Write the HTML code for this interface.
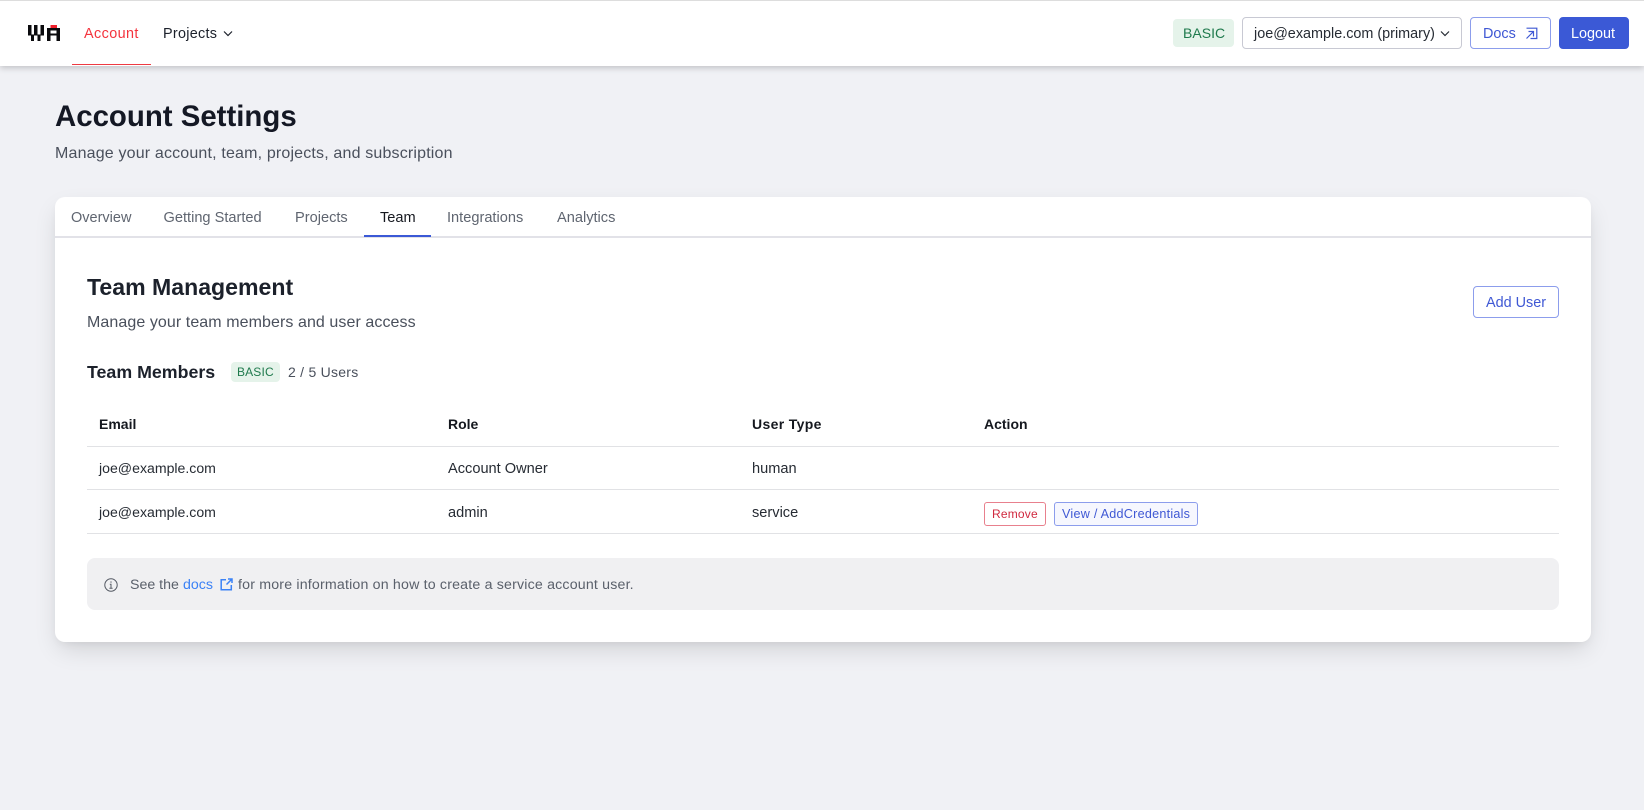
<!DOCTYPE html>
<html lang="en"><head><meta charset="utf-8"><title>Account Settings</title>
<style>
*{box-sizing:border-box}
html,body{margin:0;padding:0;width:1644px;height:810px;overflow:hidden;background:#f0f1f5;font-family:"Liberation Sans",Arial,sans-serif;color:#1c212b}
.t{position:absolute;white-space:nowrap;line-height:20px;font-size:14.6px}
.box{position:absolute}
.hdr{left:0;top:0;width:1644px;height:66px;background:#fff;border-top:1px solid #ddd;box-shadow:0 2px 6px rgba(0,0,0,.2)}
.card{left:55px;top:197px;width:1536px;height:445px;background:#fff;border-radius:10px;box-shadow:0 10px 25px -4px rgba(0,0,0,.14),0 4px 10px -4px rgba(0,0,0,.08)}
.btn{position:absolute;border-radius:4px;background:#fff;border:1px solid #8c9dec;height:32px}
.g{color:#5f6570}
.line{position:absolute;left:87px;width:1472px;height:1px;background:#e1e2e5}
svg{position:absolute;display:block}
</style></head><body>
<div class="box hdr"></div>
<svg style="left:28px;top:25px" width="32" height="16" viewBox="0 0 32 16">
<g fill="#0b0b0e"><rect x="0" y="0" width="3.5" height="10.5"/><rect x="6" y="0" width="3.5" height="10.5"/><rect x="12.5" y="0" width="3.5" height="10.5"/><rect x="3" y="9.5" width="3" height="6.5"/><rect x="9.5" y="9.5" width="3" height="6.5"/><rect x="19" y="3" width="13" height="2.5"/><rect x="19" y="3" width="3.5" height="13"/><rect x="28.5" y="3" width="3.5" height="13"/><rect x="22" y="8.5" width="7" height="2"/></g>
<rect x="22.5" y="0" width="6.5" height="3" fill="#f0202c"/></svg>
<div class="t" style="left:84px;top:24px;color:#f4333d;font-size:14.4px;letter-spacing:.4px">Account</div>
<div class="box" style="left:72px;top:64px;width:79px;height:1px;background:#ee3a42"></div>
<div class="t" style="left:163px;top:24px;color:#1c212b;font-size:14.4px;letter-spacing:.28px">Projects</div>
<svg style="left:223px;top:30px" width="10" height="7" viewBox="0 0 10 7" fill="none" stroke="#1c212b" stroke-width="1.2"><path d="M1 1.5l4 4 4-4"/></svg>
<div class="box" style="left:1173px;top:19px;width:61px;height:28px;background:#e5f3ea;border-radius:4px"></div>
<div class="t" style="left:1183px;top:23px;color:#1f7a4d;font-size:14px;letter-spacing:.02px">BASIC</div>
<div class="btn" style="left:1242px;top:17px;width:220px;border-color:#c8c9d3"></div>
<div class="t" style="left:1254px;top:24px;color:#262b33;font-size:14.4px">joe@example.com (primary)</div>
<svg style="left:1440px;top:30px" width="10" height="7" viewBox="0 0 10 7" fill="none" stroke="#262b33" stroke-width="1.2"><path d="M1 1.5l4 4 4-4"/></svg>
<div class="btn" style="left:1470px;top:17px;width:81px"></div>
<div class="t" style="left:1483px;top:24px;color:#3f58d4;font-size:14.4px">Docs</div>
<svg style="left:1525px;top:27px" width="13" height="13" viewBox="0 0 13 13" fill="none" stroke="#3f58d4" stroke-width="1.2"><path d="M1.5 1.2h10.3v10.3H5.5M8.5 4.5L1.5 11.5M3.5 4.5h5v5"/></svg>
<div class="btn" style="left:1559px;top:17px;width:70px;background:#3b59d6;border-color:#3b59d6"></div>
<div class="t" style="left:1571px;top:24px;color:#fff;font-size:14.4px">Logout</div>

<div class="t" style="left:55px;top:97px;line-height:40px;font-size:29.4px;font-weight:bold;color:#141824">Account Settings</div>
<div class="t" style="left:55px;top:144px;font-size:16px;color:#4a505c;letter-spacing:.17px">Manage your account, team, projects, and subscription</div>

<div class="box card"></div>
<div class="box" style="left:55px;top:236px;width:1536px;height:2px;background:#e2e2e8"></div>
<div class="box" style="left:364px;top:235px;width:67px;height:2px;background:#3b59d6"></div>
<div class="t g" style="left:71px;top:208px;font-size:14.5px">Overview</div>
<div class="t g" style="left:163.5px;top:208px">Getting Started</div>
<div class="t g" style="left:295px;top:208px">Projects</div>
<div class="t" style="left:380px;top:208px;color:#15181f">Team</div>
<div class="t g" style="left:447px;top:208px">Integrations</div>
<div class="t g" style="left:557px;top:208px">Analytics</div>

<div class="t" style="left:87px;top:272px;line-height:30px;font-size:23.1px;font-weight:bold;color:#1c212b">Team Management</div>
<div class="t" style="left:87px;top:313px;font-size:16px;color:#4a505c;letter-spacing:.08px">Manage your team members and user access</div>
<div class="btn" style="left:1473px;top:286px;width:86px"></div>
<div class="t" style="left:1486px;top:293px;color:#3f58d4;font-size:14.4px">Add User</div>

<div class="t" style="left:87px;top:362px;font-size:17.8px;font-weight:bold;color:#1c212b">Team Members</div>
<div class="box" style="left:231px;top:362px;width:49px;height:20px;background:#e5f3ea;border-radius:4px"></div>
<div class="t" style="left:237px;top:362px;font-size:12px;color:#1f7a4d;letter-spacing:.15px">BASIC</div>
<div class="t" style="left:288px;top:362px;font-size:14px;color:#4a505c;letter-spacing:.25px">2 / 5 Users</div>

<div class="t" style="left:99px;top:414px;font-size:14px;font-weight:bold;color:#15181f">Email</div>
<div class="t" style="left:448px;top:414px;font-size:14px;font-weight:bold;color:#15181f">Role</div>
<div class="t" style="left:752px;top:414px;font-size:14px;font-weight:bold;color:#15181f;letter-spacing:.35px">User Type</div>
<div class="t" style="left:984px;top:414px;font-size:14px;font-weight:bold;color:#15181f">Action</div>
<div class="line" style="top:446px"></div>
<div class="t" style="left:99px;top:458px;color:#262b33;font-size:14.1px">joe@example.com</div>
<div class="t" style="left:448px;top:459px;color:#262b33">Account Owner</div>
<div class="t" style="left:752px;top:459px;color:#262b33">human</div>
<div class="line" style="top:489px"></div>
<div class="t" style="left:99px;top:502px;color:#262b33;font-size:14.1px">joe@example.com</div>
<div class="t" style="left:448px;top:503px;color:#262b33">admin</div>
<div class="t" style="left:752px;top:503px;color:#262b33">service</div>
<div class="btn" style="left:984px;top:502px;width:62px;height:24px;border-color:#e8808d;border-radius:3px"></div>
<div class="t" style="left:992px;top:504px;font-size:12px;color:#d0293f;letter-spacing:.2px">Remove</div>
<div class="btn" style="left:1054px;top:502px;width:144px;height:24px;background:#f6f7fe;border-radius:3px"></div>
<div class="t" style="left:1062px;top:504px;font-size:12.6px;color:#3f58d4;letter-spacing:.25px">View / AddCredentials</div>
<div class="line" style="top:533px"></div>

<div class="box" style="left:87px;top:558px;width:1472px;height:52px;background:#f0f0f2;border-radius:8px"></div>
<svg style="left:104px;top:578px" width="14" height="14" viewBox="0 0 14 14" fill="none" stroke="#555a64" stroke-width="1"><circle cx="7" cy="7" r="6.2"/><path d="M5.8 6.2H7v4M5.4 10.2h3.2M7 3.4v1.3"/></svg>
<div class="t" style="left:130px;top:575px;font-size:14.2px;color:#5a606b">See the</div>
<div class="t" style="left:183px;top:575px;font-size:14.2px;color:#3b82f6">docs</div>
<svg style="left:220px;top:578px" width="13" height="13" viewBox="0 0 13 13" fill="none" stroke="#3b82f6" stroke-width="1.5"><path d="M6 1.7H1.2v10.1h10.1V7M8 1h4v4M11.6 1.4L6.5 6.5"/></svg>
<div class="t" style="left:238px;top:575px;font-size:14.2px;color:#5a606b;letter-spacing:.18px">for more information on how to create a service account user.</div>
</body></html>
